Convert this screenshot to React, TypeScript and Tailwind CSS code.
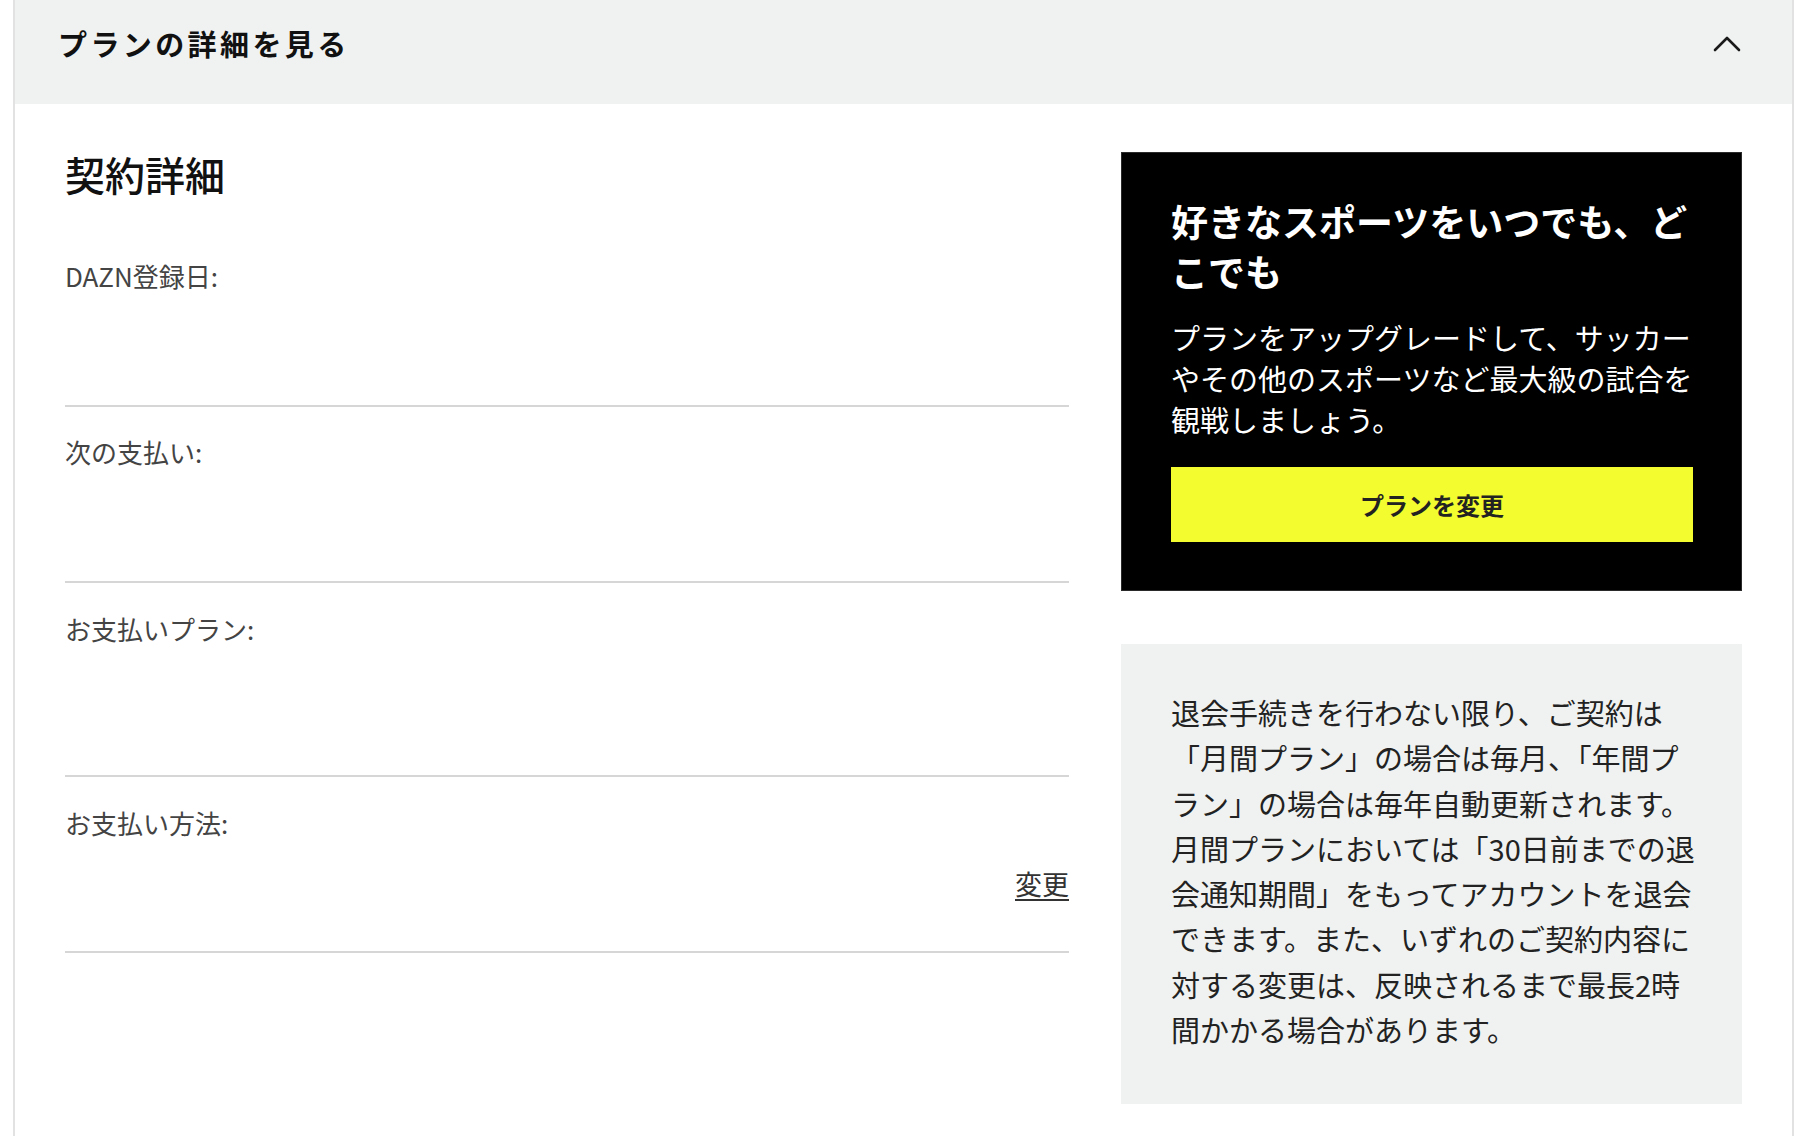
const font = { fontFamily: '"Noto Sans CJK JP", "Noto Sans", sans-serif' };

function ChevronUp() {
  return (
    <svg width="30" height="18" viewBox="0 0 30 18" fill="none" className="block">
      <polyline points="3,15 15,3 27,15" stroke="#1a1a1a" strokeWidth="2.6" strokeLinecap="round" strokeLinejoin="round" />
    </svg>
  );
}

function DetailRow({ label, top, spacer, children }: { label: string; top: number; spacer: number; children?: React.ReactNode }) {
  return (
    <div className="border-b-2 border-[#d6d6d6]" style={{ paddingTop: top }}>
      <div className="text-[26px] leading-[36px] text-[#444]">{label}</div>
      {children}
      <div style={{ height: spacer }} />
    </div>
  );
}

export default function App() {
  return (
    <div className="min-h-[1136px] bg-white" style={font}>
      <div className="ml-[13px] w-[1781px] min-h-[1136px] border-x-2 border-[#e2e2e2]">
        <div className="flex h-[104px] items-center justify-between bg-[#f0f2f1] pl-[43px] pr-[50px] pb-[16px]">
          <h2 className="text-[29px] font-bold tracking-[3.4px] text-[#111]">プランの詳細を見る</h2>
          <ChevronUp />
        </div>

        <div className="grid grid-cols-[1fr_621px] gap-[52px] px-[50px] pt-[48px] pb-[28px]">
          <div>
            <h3 className="text-[40px] font-medium leading-[44px] text-[#111]">契約詳細</h3>
            <DetailRow label="DAZN登録日:" top={62} spacer={111} />
            <DetailRow label="次の支払い:" top={27} spacer={111} />
            <DetailRow label="お支払いプラン:" top={28} spacer={128} />
            <DetailRow label="お支払い方法:" top={28} spacer={49}>
              <div className="mt-[25px] flex justify-end">
                <button className="text-[27px] leading-[36px] text-[#333] underline underline-offset-4">変更</button>
              </div>
            </DetailRow>
          </div>

          <div className="flex flex-col gap-[53px]">
            <div className="border border-[#2a2a2a] bg-black pt-[43px] pb-[48px] pl-[49px] pr-[38px]">
              <p className="text-[37px] font-bold leading-[50px] text-white">
                好きなスポーツをいつでも、ど<br />こでも
              </p>
              <p className="mt-[21px] text-[29px] leading-[41px] text-white">
                プランをアップグレードして、サッカー<br />
                やその他のスポーツなど最大級の試合を<br />
                観戦しましょう。
              </p>
              <button className="mt-[27px] flex h-[75px] w-[522px] items-center justify-center bg-[#f2fc2e] text-[24px] font-bold text-[#222]">
                プランを変更
              </button>
            </div>

            <div className="bg-[#f0f2f1] pt-[46px] pb-[52px] pl-[50px] pr-[38px]">
              <p className="text-[29px] leading-[45.3px] text-[#222]">
                退会手続きを行わない限り、ご契約は<br />
                「月間プラン」の場合は毎月、「年間プ<br />
                ラン」の場合は毎年自動更新されます。<br />
                月間プランにおいては「30日前までの退<br />
                会通知期間」をもってアカウントを退会<br />
                できます。また、いずれのご契約内容に<br />
                対する変更は、反映されるまで最長2時<br />
                間かかる場合があります。
              </p>
            </div>
          </div>
        </div>
      </div>
    </div>
  );
}
